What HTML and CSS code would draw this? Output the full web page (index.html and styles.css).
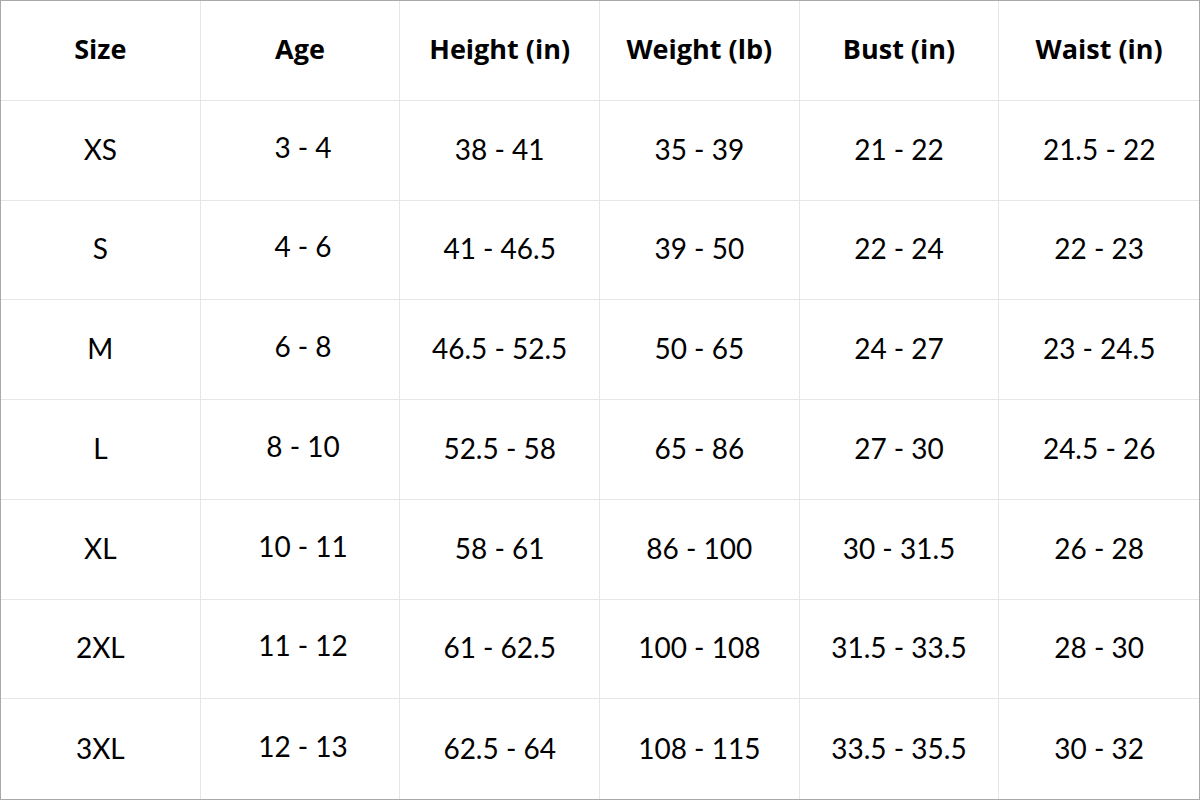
FILE: index.html
```html
<!DOCTYPE html>
<html>
<head>
<meta charset="utf-8">
<link rel="stylesheet" href="styles.css">
</head>
<body>
<div class="chart">
  <div class="cell head">Size</div><div class="cell head">Age</div><div class="cell head">Height (in)</div><div class="cell head">Weight (lb)</div><div class="cell head">Bust (in)</div><div class="cell head last">Waist (in)</div>

  <div class="cell">XS</div><div class="cell age">3 - 4</div><div class="cell">38 - 41</div><div class="cell">35 - 39</div><div class="cell">21 - 22</div><div class="cell last">21.5 - 22</div>
  <div class="cell">S</div><div class="cell age">4 - 6</div><div class="cell">41 - 46.5</div><div class="cell">39 - 50</div><div class="cell">22 - 24</div><div class="cell last">22 - 23</div>
  <div class="cell">M</div><div class="cell age">6 - 8</div><div class="cell">46.5 - 52.5</div><div class="cell">50 - 65</div><div class="cell">24 - 27</div><div class="cell last">23 - 24.5</div>
  <div class="cell">L</div><div class="cell age">8 - 10</div><div class="cell">52.5 - 58</div><div class="cell">65 - 86</div><div class="cell">27 - 30</div><div class="cell last">24.5 - 26</div>
  <div class="cell">XL</div><div class="cell age">10 - 11</div><div class="cell">58 - 61</div><div class="cell">86 - 100</div><div class="cell">30 - 31.5</div><div class="cell last">26 - 28</div>
  <div class="cell">2XL</div><div class="cell age">11 - 12</div><div class="cell">61 - 62.5</div><div class="cell">100 - 108</div><div class="cell">31.5 - 33.5</div><div class="cell last">28 - 30</div>
  <div class="cell bottom">3XL</div><div class="cell age bottom">12 - 13</div><div class="cell bottom">62.5 - 64</div><div class="cell bottom">108 - 115</div><div class="cell bottom">33.5 - 35.5</div><div class="cell last bottom">30 - 32</div>
</div>
</body>
</html>
```

FILE: styles.css
```css
html, body {
  margin: 0;
  padding: 0;
  background: #ffffff;
}
.chart {
  box-sizing: border-box;
  width: 1200px;
  height: 800px;
  border: 1px solid #a9a9a9;
  display: grid;
  grid-template-columns: repeat(6, 1fr);
  grid-template-rows: repeat(8, 1fr);
  font-family: "Lato", "Liberation Sans", sans-serif;
  color: #000000;
}
.cell {
  display: flex;
  align-items: center;
  justify-content: center;
  border-right: 1px solid #e6e6e6;
  border-bottom: 1px solid #e6e6e6;
  font-size: 28px;
  font-weight: 400;
  padding-bottom: 3px;
}
.cell.last {
  border-right: none;
}
.cell.bottom {
  border-bottom: none;
}
.cell.head {
  font-family: "Open Sans", "Liberation Sans", sans-serif;
  font-weight: 700;
  font-size: 27px;
  padding-bottom: 4px;
}
.cell.age {
  padding: 0 0 7px 6px;
}
```
